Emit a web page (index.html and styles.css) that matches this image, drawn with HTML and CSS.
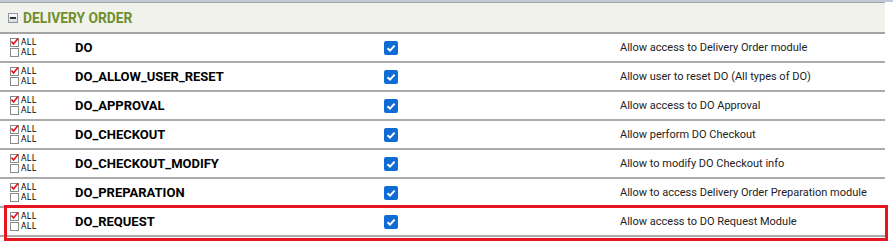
FILE: index.html
```html
<!DOCTYPE html>
<html>
<head>
<meta charset="utf-8">
<link rel="stylesheet" href="styles.css">
</head>
<body>
<div class="topband"></div>
<div class="panel">
  <div class="section-head">
    <span class="toggle"><span class="toggle-bar"></span></span>
    <span class="section-title">DELIVERY ORDER</span>
  </div>
  <div class="rows">
    <div class="row">
      <div class="all-group">
        <div class="all-item"><span class="mini-box checked"><svg viewBox="0 0 9 9"><path d="M1.5 4.5 L3.5 7 L8 1.5" /></svg></span><span class="all-label">ALL</span></div>
        <div class="all-item"><span class="mini-box"></span><span class="all-label">ALL</span></div>
      </div>
      <div class="perm-name">DO</div>
      <span class="blue-check"><svg viewBox="0 0 14 14"><path d="M3.5 7.2 L6 9.6 L10.6 4.6" /></svg></span>
      <div class="perm-desc">Allow access to Delivery Order module</div>
    </div>
    <div class="row">
      <div class="all-group">
        <div class="all-item"><span class="mini-box checked"><svg viewBox="0 0 9 9"><path d="M1.5 4.5 L3.5 7 L8 1.5" /></svg></span><span class="all-label">ALL</span></div>
        <div class="all-item"><span class="mini-box"></span><span class="all-label">ALL</span></div>
      </div>
      <div class="perm-name">DO_ALLOW_USER_RESET</div>
      <span class="blue-check"><svg viewBox="0 0 14 14"><path d="M3.5 7.2 L6 9.6 L10.6 4.6" /></svg></span>
      <div class="perm-desc">Allow user to reset DO (All types of DO)</div>
    </div>
    <div class="row">
      <div class="all-group">
        <div class="all-item"><span class="mini-box checked"><svg viewBox="0 0 9 9"><path d="M1.5 4.5 L3.5 7 L8 1.5" /></svg></span><span class="all-label">ALL</span></div>
        <div class="all-item"><span class="mini-box"></span><span class="all-label">ALL</span></div>
      </div>
      <div class="perm-name">DO_APPROVAL</div>
      <span class="blue-check"><svg viewBox="0 0 14 14"><path d="M3.5 7.2 L6 9.6 L10.6 4.6" /></svg></span>
      <div class="perm-desc">Allow access to DO Approval</div>
    </div>
    <div class="row">
      <div class="all-group">
        <div class="all-item"><span class="mini-box checked"><svg viewBox="0 0 9 9"><path d="M1.5 4.5 L3.5 7 L8 1.5" /></svg></span><span class="all-label">ALL</span></div>
        <div class="all-item"><span class="mini-box"></span><span class="all-label">ALL</span></div>
      </div>
      <div class="perm-name">DO_CHECKOUT</div>
      <span class="blue-check"><svg viewBox="0 0 14 14"><path d="M3.5 7.2 L6 9.6 L10.6 4.6" /></svg></span>
      <div class="perm-desc">Allow perform DO Checkout</div>
    </div>
    <div class="row">
      <div class="all-group">
        <div class="all-item"><span class="mini-box checked"><svg viewBox="0 0 9 9"><path d="M1.5 4.5 L3.5 7 L8 1.5" /></svg></span><span class="all-label">ALL</span></div>
        <div class="all-item"><span class="mini-box"></span><span class="all-label">ALL</span></div>
      </div>
      <div class="perm-name">DO_CHECKOUT_MODIFY</div>
      <span class="blue-check"><svg viewBox="0 0 14 14"><path d="M3.5 7.2 L6 9.6 L10.6 4.6" /></svg></span>
      <div class="perm-desc">Allow to modify DO Checkout info</div>
    </div>
    <div class="row">
      <div class="all-group">
        <div class="all-item"><span class="mini-box checked"><svg viewBox="0 0 9 9"><path d="M1.5 4.5 L3.5 7 L8 1.5" /></svg></span><span class="all-label">ALL</span></div>
        <div class="all-item"><span class="mini-box"></span><span class="all-label">ALL</span></div>
      </div>
      <div class="perm-name">DO_PREPARATION</div>
      <span class="blue-check"><svg viewBox="0 0 14 14"><path d="M3.5 7.2 L6 9.6 L10.6 4.6" /></svg></span>
      <div class="perm-desc">Allow to access Delivery Order Preparation module</div>
    </div>
    <div class="row highlighted">
      <div class="all-group">
        <div class="all-item"><span class="mini-box checked"><svg viewBox="0 0 9 9"><path d="M1.5 4.5 L3.5 7 L8 1.5" /></svg></span><span class="all-label">ALL</span></div>
        <div class="all-item"><span class="mini-box"></span><span class="all-label">ALL</span></div>
      </div>
      <div class="perm-name">DO_REQUEST</div>
      <span class="blue-check"><svg viewBox="0 0 14 14"><path d="M3.5 7.2 L6 9.6 L10.6 4.6" /></svg></span>
      <div class="perm-desc">Allow access to DO Request Module</div>
      <div class="highlight-box"></div>
    </div>
  </div>
</div>
</body>
</html>
```
FILE: styles.css
```css
html, body {
  margin: 0;
  padding: 0;
  background: #ffffff;
}
body {
  width: 893px;
  height: 245px;
  overflow: hidden;
  font-family: Roboto, "Liberation Sans", sans-serif;
}
.topband {
  height: 2px;
  background: #c2cad8;
}
.panel {
  width: 885px;
}
.section-head {
  height: 29px;
  background: #f2f2ed;
  border-top: 1px solid #a4a4a4;
  border-bottom: 2px solid #a4a4a4;
  display: flex;
  align-items: center;
  box-sizing: content-box;
}
.toggle {
  width: 8px;
  height: 8px;
  margin-left: 8px;
  margin-right: 5px;
  border: 1px solid #8d96a6;
  background: linear-gradient(#ffffff, #d8dbe0);
  display: flex;
  align-items: center;
  justify-content: center;
}
.toggle-bar {
  width: 6px;
  height: 2px;
  background: #333;
}
.section-title {
  font-family: Roboto, "Liberation Sans", sans-serif;
  font-weight: 700;
  font-size: 13.8px;
  color: #6f8e2c;
}
.row {
  position: relative;
  height: 27px;
  border-bottom: 2px solid #ababab;
  display: grid;
  grid-template-columns: 75px 309px 236px 1fr;
  align-items: center;
}
.all-group {
  display: flex;
  flex-direction: column;
  gap: 1px;
  padding-left: 10px;
}
.all-item {
  display: flex;
  align-items: center;
  height: 9px;
}
.mini-box {
  width: 7px;
  height: 7px;
  border: 1px solid #8a8a8a;
  background: #fff;
  display: inline-block;
  position: relative;
}
.mini-box svg {
  position: absolute;
  left: -1px;
  top: -2px;
  width: 9px;
  height: 9px;
}
.mini-box svg path {
  fill: none;
  stroke: #e0101a;
  stroke-width: 1.6;
}
.all-label {
  font-family: "DejaVu Sans", sans-serif;
  font-size: 8px;
  color: #000;
  margin-left: 2px;
  line-height: 9px;
  letter-spacing: 0.4px;
}
.perm-name {
  font-family: Roboto, "Liberation Sans", sans-serif;
  font-weight: 700;
  font-size: 13px;
  color: #000;
}
.blue-check {
  width: 14px;
  height: 14px;
  border-radius: 2px;
  background: #0f6cd4;
  display: block;
  justify-self: start;
}
.blue-check svg {
  width: 14px;
  height: 14px;
  display: block;
}
.blue-check svg path {
  fill: none;
  stroke: #fff;
  stroke-width: 2;
}
.perm-desc {
  font-family: Roboto, "Liberation Sans", sans-serif;
  font-size: 11px;
  color: #222;
  white-space: nowrap;
}
.highlight-box {
  position: absolute;
  left: 4px;
  top: -3px;
  width: 878px;
  height: 30px;
  border: 3px solid #e5161f;
  pointer-events: none;
}
```
